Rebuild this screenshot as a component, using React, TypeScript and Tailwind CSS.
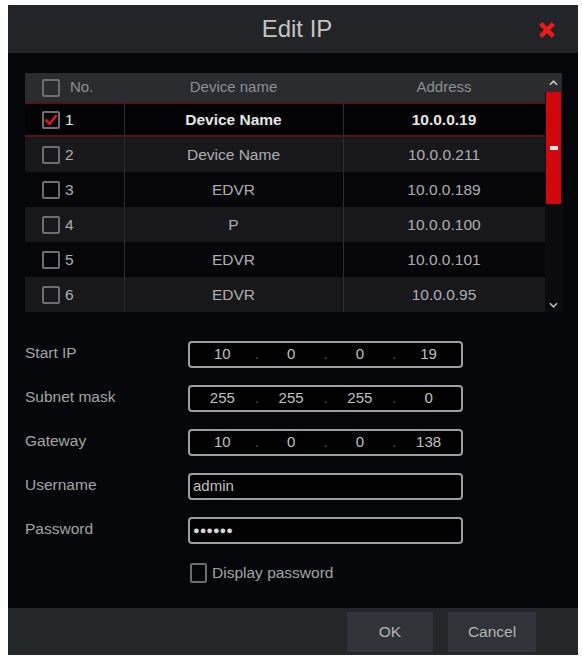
import React from "react";

const rows = [
  { no: 1, name: "Device Name", addr: "10.0.0.19", checked: true },
  { no: 2, name: "Device Name", addr: "10.0.0.211" },
  { no: 3, name: "EDVR", addr: "10.0.0.189" },
  { no: 4, name: "P", addr: "10.0.0.100" },
  { no: 5, name: "EDVR", addr: "10.0.0.101" },
  { no: 6, name: "EDVR", addr: "10.0.0.95" },
];

function Box({ checked = false, size = "w-[18px] h-[18px]" }: { checked?: boolean; size?: string }) {
  return (
    <div className={`${size} border-2 border-[#6e6e72] rounded-[2px] flex items-center justify-center shrink-0`}>
      {checked && (
        <svg viewBox="0 0 16 16" className="w-[14px] h-[14px]">
          <path d="M2.5 8.5 L6.5 12.5 L13.5 3.5" fill="none" stroke="#e0141e" strokeWidth="3" strokeLinecap="round" strokeLinejoin="round" />
        </svg>
      )}
    </div>
  );
}

function IpBox({ parts }: { parts: string[] }) {
  return (
    <div className="w-[275px] h-[27px] border-2 border-[#9c9ea2] rounded-[4px] bg-black flex items-center text-[15px] text-[#c0c0c0]">
      {parts.map((p, i) => (
        <React.Fragment key={i}>
          <div className="flex-1 text-center">{p}</div>
          {i < 3 && <div className="w-[4px] text-center text-[#555]">.</div>}
        </React.Fragment>
      ))}
    </div>
  );
}

function FormRow({ label, children }: { label: string; children: React.ReactNode }) {
  return (
    <div className="flex items-center h-[27px]">
      <div className="w-[163px] text-[15.5px] text-[#a4a4a4] -mt-[4px]">{label}</div>
      {children}
    </div>
  );
}

export default function App() {
  return (
    <div className="w-[582px] h-[659px] bg-white overflow-hidden" style={{ fontFamily: '"Liberation Sans", Arial, sans-serif' }}>
      <div className="ml-[8px] mt-[5px] w-[570px] h-[650px] bg-[#04060a] flex flex-col">
        {/* Title */}
        <div className="h-[48px] bg-[#222427] flex items-center justify-center relative shrink-0">
          <span className="text-[24px] text-[#c4c4c4] ml-[8px]">Edit IP</span>
          <svg viewBox="0 0 20 20" className="absolute right-[22px] top-[16px] w-[18px] h-[18px]">
            <path d="M3 3 L17 17 M17 3 L3 17" stroke="#ec1a1a" strokeWidth="5" strokeLinecap="butt" />
          </svg>
        </div>

        {/* Body */}
        <div className="flex-1 pl-[17px] pr-[16px] pt-[20px]">
          <div className="flex w-[537px] h-[239px]">
            <div className="flex-1 flex flex-col relative">
              <div className="absolute left-[99px] top-0 bottom-0 w-px bg-[#2c2d31]" />
              <div className="absolute left-[318px] top-0 bottom-0 w-px bg-[#2c2d31]" />
              <div className="h-[29px] bg-[#2a2c30] flex items-center text-[15px] text-[#8e8f93]">
                <div className="w-[99px] flex items-center pl-[17px] gap-[10px]">
                  <Box />
                  <span>No.</span>
                </div>
                <div className="w-[219px] text-center">Device name</div>
                <div className="flex-1 text-center">Address</div>
              </div>
              {rows.map((r, i) => (
                <div
                  key={r.no}
                  className={`h-[35px] flex items-center text-[15.5px] ${
                    r.checked
                      ? "bg-[#030306] border-y-2 border-[#55121a] text-[#e6e6e6] font-bold"
                      : i % 2 === 1
                      ? "bg-[#18181b] text-[#aeaeb2]"
                      : "bg-[#060609] text-[#aeaeb2]"
                  }`}
                >
                  <div className="w-[99px] flex items-center pl-[17px] gap-[5px]">
                    <Box checked={r.checked} />
                    <span className="font-normal">{r.no}</span>
                  </div>
                  <div className="w-[219px] text-center">{r.name}</div>
                  <div className="flex-1 text-center">{r.addr}</div>
                </div>
              ))}
            </div>
            {/* Scrollbar */}
            <div className="w-[17px] bg-[#0b0b0e] flex flex-col items-center">
              <div className="h-[19px] w-full bg-[#2a2c30] flex items-center justify-center">
                <svg viewBox="0 0 10 6" className="w-[9px] h-[6px]">
                  <path d="M1 5 L5 1 L9 5" fill="none" stroke="#c8c8c8" strokeWidth="1.8" />
                </svg>
              </div>
              <div className="w-[15px] h-[112px] bg-[#d3060d] flex items-center justify-center">
                <div className="w-[8px] h-[4px] bg-[#e6e6e6]" />
              </div>
              <div className="flex-1" />
              <div className="h-[14px] flex items-center justify-center">
                <svg viewBox="0 0 10 6" className="w-[9px] h-[6px]">
                  <path d="M1 1 L5 5 L9 1" fill="none" stroke="#b8b8b8" strokeWidth="1.8" />
                </svg>
              </div>
            </div>
          </div>

          {/* Form */}
          <div className="mt-[29px] flex flex-col gap-[17px]">
            <FormRow label="Start IP">
              <IpBox parts={["10", "0", "0", "19"]} />
            </FormRow>
            <FormRow label="Subnet mask">
              <IpBox parts={["255", "255", "255", "0"]} />
            </FormRow>
            <FormRow label="Gateway">
              <IpBox parts={["10", "0", "0", "138"]} />
            </FormRow>
            <FormRow label="Username">
              <div className="w-[275px] h-[27px] border-2 border-[#9c9ea2] rounded-[4px] bg-black flex items-center pl-[3px] text-[15px] text-[#c0c0c0]">
                admin
              </div>
            </FormRow>
            <FormRow label="Password">
              <div className="w-[275px] h-[27px] border-2 border-[#9c9ea2] rounded-[4px] bg-black flex items-center pl-[3px] text-[11px] text-[#d8d8d8] tracking-[0px]">
                ●●●●●●
              </div>
            </FormRow>
            <div className="flex items-center h-[23px] pl-[165px] gap-[5px]">
              <Box size="w-[17px] h-[20px]" />
              <span className="text-[15.5px] text-[#a4a4a4]">Display password</span>
            </div>
          </div>
        </div>

        {/* Footer */}
        <div className="h-[47px] bg-[#24272a] flex items-center justify-end pr-[42px] gap-[15px] shrink-0">
          <div className="w-[86px] h-[40px] bg-[#30333a] flex items-center justify-center text-[15.5px] text-[#b4b4b4]">OK</div>
          <div className="w-[88px] h-[40px] bg-[#30333a] flex items-center justify-center text-[15.5px] text-[#b4b4b4]">Cancel</div>
        </div>
      </div>
    </div>
  );
}
